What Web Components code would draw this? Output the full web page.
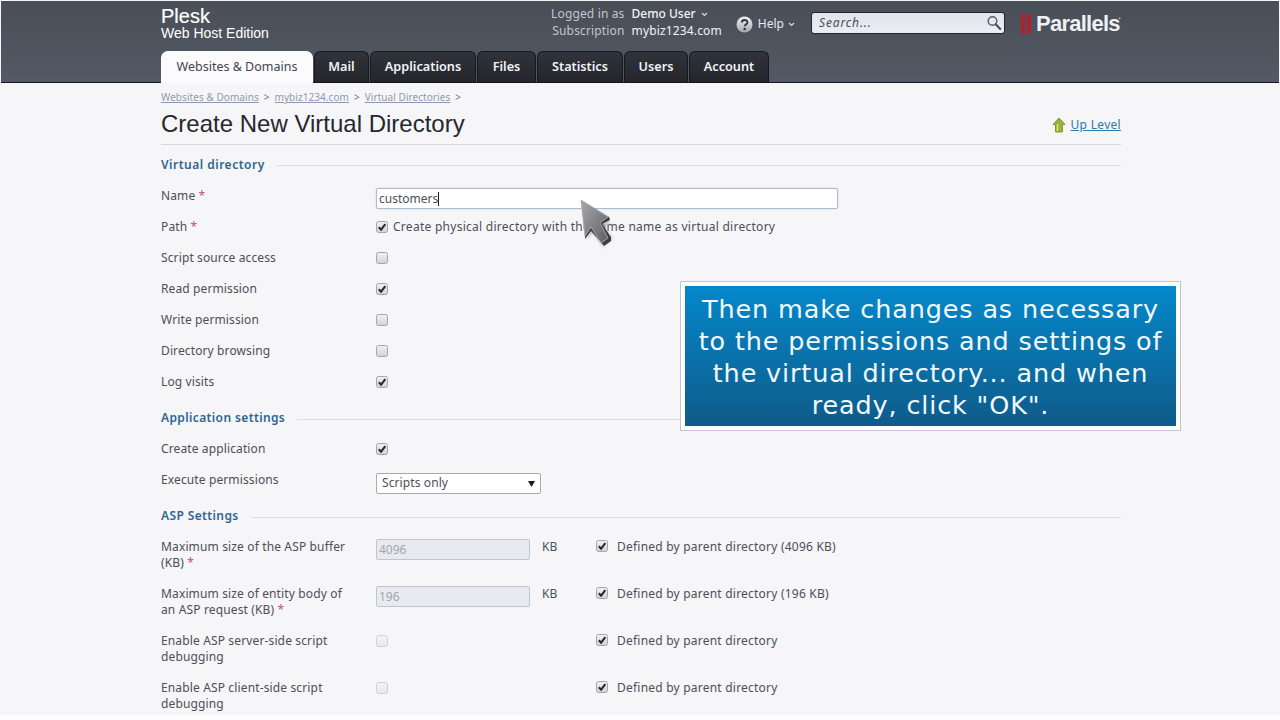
<!DOCTYPE html>
<html lang="en"><head><meta charset="utf-8"><title>Create New Virtual Directory</title>
<style>
html,body{margin:0;padding:0;background:#fdfdfe;height:720px;overflow:hidden}
body{font:12px/16px "Noto Sans",sans-serif;color:#4c5056;letter-spacing:.27px}
</style></head>
<body>
<plesk-app>
  <plesk-header slot="header">
    <plesk-tab active style="width:152px">Websites &amp; Domains</plesk-tab>
    <plesk-tab style="width:55px">Mail</plesk-tab>
    <plesk-tab style="width:106px">Applications</plesk-tab>
    <plesk-tab style="width:59px">Files</plesk-tab>
    <plesk-tab style="width:86px">Statistics</plesk-tab>
    <plesk-tab style="width:64px">Users</plesk-tab>
    <plesk-tab style="width:80px">Account</plesk-tab>
  </plesk-header>
  <page-title></page-title>

  <form-section first>Virtual directory</form-section>
  <form-row label="Name" req><text-field value="customers" focus style="width:462px"></text-field></form-row>
  <form-row label="Path" req><p-check checked></p-check><span class="t">Create physical directory with the same name as virtual directory</span></form-row>
  <form-row label="Script source access"><p-check></p-check></form-row>
  <form-row label="Read permission"><p-check checked></p-check></form-row>
  <form-row label="Write permission"><p-check></p-check></form-row>
  <form-row label="Directory browsing"><p-check></p-check></form-row>
  <form-row label="Log visits"><p-check checked></p-check></form-row>

  <form-section>Application settings</form-section>
  <form-row label="Create application"><p-check checked></p-check></form-row>
  <form-row label="Execute permissions"><select-box>Scripts only</select-box></form-row>

  <form-section tight>ASP Settings</form-section>
  <asp-row label="Maximum size of the ASP buffer (KB)" req value="4096" note="Defined by parent directory (4096 KB)"></asp-row>
  <asp-row label="Maximum size of entity body of an ASP request (KB)" req value="196" note="Defined by parent directory (196 KB)"></asp-row>
  <asp-row label="Enable ASP server-side script debugging" note="Defined by parent directory"></asp-row>
  <asp-row label="Enable ASP client-side script debugging" note="Defined by parent directory"></asp-row>

  <call-out slot="over">Then make changes as necessary to the permissions and settings of the virtual directory... and when ready, click "OK".</call-out>
  <mouse-pointer slot="over"></mouse-pointer>
</plesk-app>

<script>
const FONT='"Noto Sans",sans-serif';
function def(name,css,html){
  customElements.define(name,class extends HTMLElement{
    constructor(){super();const s=this.attachShadow({mode:'open'});
      s.innerHTML='<style>'+css+'</style>'+(typeof html==='function'?html(this):html);}
  });
}
function esc(s){return (s||'').replace(/&/g,'&amp;').replace(/</g,'&lt;')}

def('plesk-app',`
 :host{display:block;position:relative;height:715px;overflow:hidden;background:#f6f5f8}
 main{display:block;width:960px;margin-left:161px}
`,`<slot name="header"></slot><main><slot></slot></main><slot name="over"></slot>`);

def('plesk-header',`
 :host{display:block;margin:1px 1px 0;height:81px;background:linear-gradient(#494e57,#535a65);border-bottom:1px solid #15171b;color:#fff}
 .in{width:960px;margin-left:160px;height:81px;display:flex;flex-direction:column}
 .top{height:50px;display:flex;align-items:flex-start;font-family:${FONT}}
 .brand{font-family:"Liberation Sans",sans-serif;letter-spacing:0;padding-top:5px;color:#fff;width:340px}
 .brand b{display:block;font-weight:400;font-size:20px;line-height:20px;-webkit-text-stroke:.2px #fff}
 .brand span{display:block;font-size:14px;line-height:15px;margin-top:0}
 .user{display:grid;grid-template-columns:auto auto;column-gap:7px;margin-left:auto;padding-top:4px;font-size:12px;line-height:17px;letter-spacing:.15px;color:#c3c6cc}
 .user .k{text-align:right}
 .user .v{color:#f2f3f5}
 .user b{font-weight:500;letter-spacing:0}
 .user svg{margin-left:5px;vertical-align:1px}
 .help{display:flex;align-items:center;gap:5px;margin:14px 0 0 14px;height:18px;color:#e8eaee;font-size:12px;letter-spacing:0}
 .search{margin:11px 0 0 16px;width:194px;height:22px;box-sizing:border-box;border:1px solid #23252b;border-radius:3px;background:linear-gradient(#e2e4ec,#eceef5);display:flex;align-items:center;justify-content:space-between;padding:0 1px 0 7px;color:#4a4d55;font-style:italic;font-size:12px;letter-spacing:.85px}
 .logo{display:flex;align-items:center;margin:13px 0 0 16px;height:20px;width:100px;flex:none}
 .logo i{display:block;width:4px;height:20px;background:#b0202e;margin-right:2px;flex:none}
 .logo span{font:700 22px/20px "Liberation Sans",sans-serif;color:#eef0f3;letter-spacing:-.75px;margin-left:3px}
 .logo sup{font:400 5px/5px "Liberation Sans",sans-serif;color:#ddd;align-self:flex-start;margin:2px 0 0 -1px}
 .tabs{display:flex;gap:1px;height:31px;align-items:stretch}
`,`<div class="in"><div class="top">
   <div class="brand"><b>Plesk</b><span>Web Host Edition</span></div>
   <div class="user"><span class="k">Logged in as</span><span class="v"><b>Demo User</b><svg width="7" height="5" viewBox="0 0 7 5"><path d="M1 1l2.500 2.500L6 1" fill="none" stroke="#d8dade" stroke-width="1.2"/></svg></span>
   <span class="k">Subscription</span><span class="v">mybiz1234.com</span></div>
   <div class="help"><svg width="17" height="17" viewBox="0 0 17 17"><defs><linearGradient id="hg" x1="0" y1="0" x2="0" y2="1"><stop offset="0" stop-color="#f0f1f4"/><stop offset="1" stop-color="#a4a7ae"/></linearGradient></defs><circle cx="8.500" cy="8.500" r="8" fill="url(#hg)"/><path d="M5.800 6.600c0-3.400 5.600-3.400 5.600-.2 0 2-2.700 2-2.700 3.800" fill="none" stroke="#33363c" stroke-width="1.900"/><circle cx="8.700" cy="13" r="1.250" fill="#33363c"/></svg><span>Help</span><svg width="7" height="5" viewBox="0 0 7 5" style="margin-left:-1px"><path d="M1 1l2.500 2.500L6 1" fill="none" stroke="#d8dade" stroke-width="1.2"/></svg></div>
   <div class="search"><span>Search...</span><svg width="18" height="18" viewBox="0 0 18 18"><circle cx="7.500" cy="7" r="4.300" fill="none" stroke="#5c6068" stroke-width="1.500"/><path d="M10.800 10.300l4.400 4.600" stroke="#4c4f56" stroke-width="2.200" stroke-linecap="round"/></svg></div>
   <div class="logo"><i></i><i></i><span>Parallels</span><sup>&#8226;</sup></div>
 </div><div class="tabs"><slot></slot></div></div>`);

def('plesk-tab',`
 :host{display:block;box-sizing:border-box;height:31px;border:1px solid #16181c;border-bottom:0;border-radius:6px 6px 0 0;background:linear-gradient(#30333b,#24262c);color:#f2f3f5;font:600 12.700px/29px ${FONT};letter-spacing:0;text-align:center;white-space:nowrap}
 :host([active]){background:#fbfbfd;color:#43464c;font-weight:400;font-size:12.500px;height:32px;border-color:#fbfbfd;border-radius:7px 7px 0 0;position:relative;z-index:1}
`,`<slot></slot>`);

def('page-title',`
 :host{display:block;height:62px;box-sizing:border-box;border-bottom:1px solid #d9dae0;position:relative;font-family:${FONT}}
 nav{display:flex;gap:5px;padding-top:6px;height:16px;font-size:10px;line-height:16px;letter-spacing:.06px;color:#6d7688;align-items:center}
 nav a{color:#8e9ab2;text-decoration:underline}
 h1{margin:4px 0 0;font:400 24px/30px "Liberation Sans",sans-serif;letter-spacing:0;color:#26282c}
 .up{position:absolute;right:0;top:33px;display:flex;align-items:center;gap:5px;font-size:12px;line-height:18px;letter-spacing:.3px}
 .up a{color:#2d78ac;text-decoration:underline}
`,`<nav><a>Websites &amp; Domains</a><span>&gt;</span><a>mybiz1234.com</a><span>&gt;</span><a>Virtual Directories</a><span>&gt;</span></nav>
 <h1>Create New Virtual Directory</h1>
 <div class="up"><svg width="14" height="16" viewBox="0 0 14 16"><path d="M7 1l6 6.500H10.500V15H3.500V7.500H1z" fill="#8fb83c" stroke="#9a8a35"/><path d="M5.500 7v7" stroke="#f0d870" stroke-width="1.600"/></svg><a>Up Level</a></div>`);

def('form-section',`
 :host{display:flex;align-items:center;gap:12px;height:16px;margin:0 0 15px;padding-top:5px;color:#2d6690;font:600 12px/16px ${FONT};letter-spacing:.38px;white-space:nowrap}
 :host([first]){padding-top:12px;letter-spacing:.5px}
 :host([first]) i{margin-top:0}
 i{flex:1;height:0;margin-top:2px;border-top:1px solid #dcdde3}
`,`<slot></slot><i></i>`);

def('form-row',`
 :host{display:flex;height:31px;font-family:${FONT}}
 .l{width:215px;flex:none;letter-spacing:.12px}
 .l i{font-style:normal;color:#c2566a}
 .c{display:flex;align-items:flex-start;gap:5px;color:#4c5056}
 ::slotted(.t){white-space:nowrap}
`,h=>`<div class="l">${esc(h.getAttribute('label'))}${h.hasAttribute('req')?' <i>*</i>':''}</div><div class="c"><slot></slot></div>`);

def('p-check',`
 :host{display:block;flex:none;width:12px;height:12px;margin:2px 0 0}
 svg{display:block}
`,h=>{const d=h.hasAttribute('disabled'),c=h.hasAttribute('checked');
 return `<svg width="12" height="12" viewBox="0 0 12 12"><defs><linearGradient id="g" x1="0" y1="0" x2="0" y2="1"><stop offset="0" stop-color="${d?'#f4f4f6':'#f2f2f4'}"/><stop offset="1" stop-color="${d?'#e8e8ec':'#d2d2d6'}"/></linearGradient></defs><rect x=".5" y=".5" width="11" height="11" rx="2" fill="url(#g)" stroke="${d?'#d0d0d6':'#a4a4aa'}"/>${c?'<path d="M2.800 6.200l2.300 2.500 4.200-5.600" fill="none" stroke="#26282c" stroke-width="2"/>':''}</svg>`});

def('text-field',`
 :host{display:block;box-sizing:border-box;height:21px;border:1px solid #a9bdcf;border-radius:2px;background:#fff;padding:0 2px;line-height:19px;letter-spacing:0;color:#4c5056;box-shadow:0 0 2px #c8d8e6;font-family:${FONT}}
 :host([disabled]){background:#e9eaf0;border-color:#c2c3cb;color:#a3a5ab;box-shadow:none}
 i{display:inline-block;width:1px;height:14px;background:#222;vertical-align:-3px}
`,h=>`${esc(h.getAttribute('value'))}${h.hasAttribute('focus')?'<i></i>':''}`);

def('select-box',`
 :host{display:flex;align-items:center;justify-content:space-between;box-sizing:border-box;width:165px;height:21px;margin-top:1px;border:1px solid #a9a9b0;border-radius:2px;background:#fff;padding:0 5px 2px;letter-spacing:.1px;color:#4c5056;font-family:${FONT}}
 svg{display:block;margin-top:2px}
`,`<span><slot></slot></span><svg width="7" height="6" viewBox="0 0 7 6"><path d="M0 0h7L3.500 6z" fill="#1d1d20"/></svg>`);

def('asp-row',`
 :host{display:grid;grid-template-columns:215px 154px 66px auto;height:47px;font-family:${FONT}}
 .l{width:190px;letter-spacing:.14px}
 .l i{font-style:normal;color:#c2566a}
 .u{padding-left:12px;letter-spacing:0}
 .n{display:flex;gap:9px;white-space:nowrap;letter-spacing:.22px}
 .n p-check{margin-top:1px}
`,h=>{const v=h.getAttribute('value');
 return `<div class="l">${esc(h.getAttribute('label'))}${h.hasAttribute('req')?' <i>*</i>':''}</div>
 <div class="f">${v?`<text-field disabled value="${v}"></text-field>`:'<p-check disabled style="margin-top:2px"></p-check>'}</div>
 <div class="u">${v?'KB':''}</div>
 <div class="n"><p-check checked></p-check><span>${esc(h.getAttribute('note'))}</span></div>`});

def('call-out',`
 :host{display:flex;align-items:center;justify-content:center;position:absolute;left:680px;top:281px;width:501px;height:150px;box-sizing:border-box;border:1px solid #c4c4cc;background:linear-gradient(#0489cc,#0f5a88) padding-box;padding:2px 8px 0;color:#f2f9fd;font:25.500px/32px "DejaVu Sans",sans-serif;letter-spacing:.85px;text-align:center;box-shadow:inset 0 0 0 4px #fff}
`,`<span><slot></slot></span>`);

def('mouse-pointer',`
 :host{display:block;position:absolute;left:578px;top:197px;width:38px;height:52px}
 svg{display:block;overflow:visible}
`,`<svg width="38" height="52" viewBox="0 0 38 52"><defs><filter id="b" x="-30%" y="-30%" width="160%" height="160%"><feGaussianBlur stdDeviation="1.400"/></filter><linearGradient id="f" x1="0" y1="0" x2="1" y2="1"><stop offset="0" stop-color="#a8a8ac"/><stop offset="1" stop-color="#606064"/></linearGradient></defs>
 <path d="M5 6L9 42 15 36 25 50 35 42 27 30 33 26z" fill="#aaa" filter="url(#b)" opacity=".6"/>
 <path d="M3 3L7 39 7 42 13 34 26 49 33 44 33 40 24 27 32 23 31 20z" fill="#3e3e42"/>
 <path d="M3 3L7 39 13 30 23 46 30 41 22 26 30 20z" fill="url(#f)" stroke="#b4b4b8" stroke-width=".8"/></svg>`);
</script>
</body></html>
